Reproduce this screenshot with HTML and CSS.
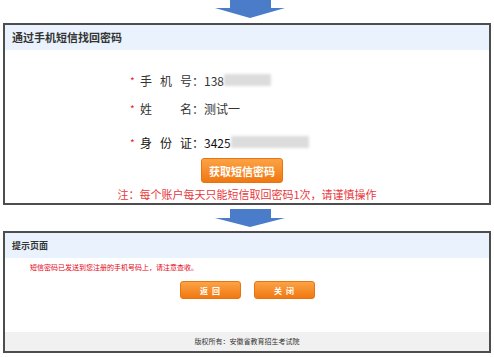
FILE: index.html
```html
<!DOCTYPE html>
<html lang="zh-CN">
<head>
    <meta charset="UTF-8">
    <meta name="viewport" content="width=device-width, initial-scale=1.0">
    <title>通过手机短信找回密码</title>
    <link rel="stylesheet" href="styles.css">
</head>
<body>

    <div class="page">
        <svg class="arrow arrow-top" width="70" height="18" viewBox="0 0 70 18">
            <polygon points="15,0 56,0 56,8 70,8 35,18 0,8 15,8" fill="#4a7cc9"/>
        </svg>

        <div class="panel">
            <div class="panel-head">通过手机短信找回密码</div>
            <div class="form">
                <div class="row">
                    <span class="star">*</span>
                    <span class="label">手机号</span><span class="colon">：</span>
                    <span class="value">138</span><span class="mask mask-phone"></span>
                </div>
                <div class="row">
                    <span class="star">*</span>
                    <span class="label">姓名</span><span class="colon">：</span>
                    <span class="value">测试一</span>
                </div>
                <div class="row row-id">
                    <span class="star">*</span>
                    <span class="label">身份证</span><span class="colon">：</span>
                    <span class="value">3425</span><span class="mask mask-id"></span>
                </div>
                <button class="btn-orange btn-big">获取短信密码</button>
                <p class="note">注：每个账户每天只能短信取回密码1次，请谨慎操作</p>
            </div>
        </div>

        <svg class="arrow arrow-mid" width="70" height="18" viewBox="0 0 70 18">
            <polygon points="15,0 56,0 56,9 70,9 35,18 0,9 15,9" fill="#4a7cc9"/>
        </svg>

        <div class="panel">
            <div class="panel-head panel-head-small">提示页面</div>
            <p class="msg">短信密码已发送到您注册的手机号码上，请注意查收。</p>
            <div class="actions">
                <button class="btn-orange btn-small">返回</button>
                <button class="btn-orange btn-small">关闭</button>
            </div>
            <div class="footer">版权所有：安徽省教育招生考试院</div>
        </div>
    </div>

</body>
</html>
```

FILE: styles.css
```css
body {
    margin: 0;
    padding: 0;
    background-color: #fff;
    font-family: "Noto Sans CJK SC", "Liberation Sans", sans-serif;
    color: #333;
}

.page {
    width: 488px;
    padding: 0 3px;
}

.arrow {
    display: block;
    margin: 0 auto;
    position: relative;
    left: 3px;
}

.arrow-top {
    margin-bottom: 5px;
}

.arrow-mid {
    margin-top: 4px;
    margin-bottom: 4px;
}

.panel {
    border: 2px solid #4d4d4d;
    background-color: #fff;
}

.panel-head {
    height: 25px;
    line-height: 25px;
    padding-left: 7px;
    background-color: #eaf3fd;
    font-size: 11px;
    font-weight: bold;
    color: #333;
}

.panel-head-small {
    font-size: 9px;
}

.form {
    padding-top: 16px;
}

.row {
    display: flex;
    align-items: center;
    height: 28px;
    padding-left: 125px;
    font-size: 12px;
    color: #333;
}

.row-id {
    margin-top: 6px;
    color: #111;
}

.star {
    width: 10px;
    color: #e4262a;
    font-size: 10px;
}

.label {
    width: 52px;
    text-align: justify;
    text-align-last: justify;
}

.colon {
    width: 12px;
}

.mask {
    display: inline-block;
    height: 12px;
    background-color: #dcdcdc;
    filter: blur(1.5px);
}

.mask-phone {
    width: 47px;
}

.mask-id {
    width: 78px;
}

.btn-orange {
    display: block;
    background: linear-gradient(#fca345, #f07812);
    border: 1px solid #e97310;
    border-radius: 3px;
    color: #fff;
    font-family: "Noto Sans CJK SC", sans-serif;
    font-weight: bold;
    padding: 0;
    cursor: pointer;
}

.btn-big {
    width: 82px;
    height: 25px;
    margin: 2px 0 0 196px;
    font-size: 11px;
}

.note {
    margin: 2px 0 0;
    line-height: 18px;
    text-align: center;
    font-size: 11px;
    color: #e8383d;
}

.msg {
    margin: 3px 0 0 25px;
    line-height: 12px;
    font-size: 7px;
    color: #e60012;
}

.actions {
    display: flex;
    justify-content: center;
    gap: 13px;
    margin-top: 8px;
}

.btn-small {
    width: 61px;
    height: 18px;
    font-size: 8px;
    letter-spacing: 4px;
    text-indent: 4px;
}

.footer {
    margin-top: 33px;
    height: 19px;
    line-height: 19px;
    background-color: #f1f1f1;
    text-align: center;
    font-size: 7px;
    color: #333;
}
```
